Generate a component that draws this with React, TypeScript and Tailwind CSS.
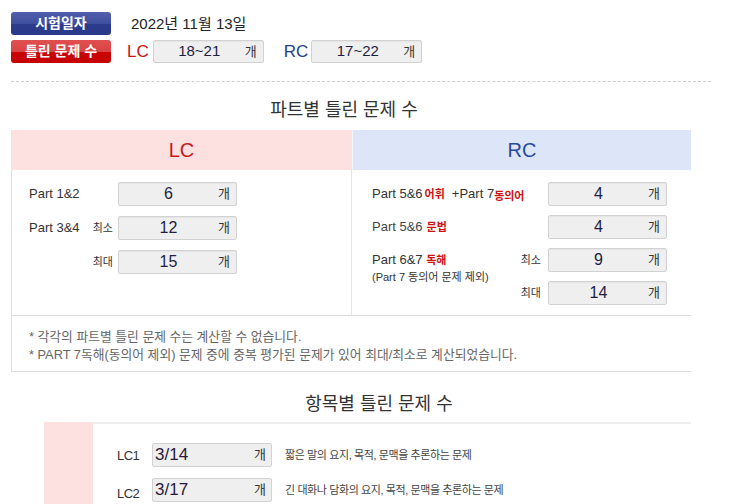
import React from "react";

const KR = "font-['Liberation_Sans','Noto_Sans_CJK_KR',sans-serif]";

function Badge({ label, tone }: { label: string; tone: "blue" | "red" }) {
  const bg =
    tone === "blue"
      ? "bg-[linear-gradient(#5060ad_0%,#3f4f9f_50%,#2c3b8c_51%,#2a3a8a_100%)]"
      : "bg-[linear-gradient(#e05050_0%,#d94444_50%,#c80404_51%,#c40000_100%)]";
  return (
    <div
      className={`flex h-[23px] w-[100px] items-center justify-center rounded-[3px] text-[14px] font-bold text-white ${bg}`}
    >
      {label}
    </div>
  );
}

function CountBox({
  value,
  w = "w-[119px]",
  h = "h-[24px]",
  size = "text-[16px]",
}: {
  value: string;
  w?: string;
  h?: string;
  size?: string;
}) {
  return (
    <div
      className={`flex ${w} ${h} shrink-0 items-center rounded-[2px] border border-[#d2d2d2] bg-[#efefef] shadow-[inset_0_1px_1px_rgba(0,0,0,0.04)]`}
    >
      <span className={`flex-1 text-center ${size} text-[#1e1e44]`}>{value}</span>
      <span className="pr-[6px] text-[13px] text-[#333]">개</span>
    </div>
  );
}

function Red({ children }: { children: React.ReactNode }) {
  return <span className="text-[11px] font-bold text-[#cc1111]">{children}</span>;
}

const ITEMS = [
  { code: "LC1", value: "3/14", desc: "짧은 말의 요지, 목적, 문맥을 추론하는 문제", pt: "pt-[3px]" },
  { code: "LC2", value: "3/17", desc: "긴 대화나 담화의 요지, 목적, 문맥을 추론하는 문제", pt: "pt-[6px]" },
];

export default function App() {
  return (
    <div className={`h-[504px] w-[732px] overflow-hidden bg-white text-[#333] ${KR}`}>
      {/* 시험 정보 */}
      <div className="pl-[11px] pt-[12px]">
        <div className="flex h-[23px] items-center">
          <Badge label="시험일자" tone="blue" />
          <span className="ml-[20px] text-[15px] leading-none text-[#222]">2022년 11월 13일</span>
        </div>
        <div className="mt-[5px] flex h-[23px] items-center">
          <Badge label="틀린 문제 수" tone="red" />
          <span className="ml-[16px] text-[17px] leading-none text-[#cc1111]">LC</span>
          <div className="ml-[4px]">
            <CountBox value="18~21" w="w-[111px]" h="h-[23px]" size="text-[15px]" />
          </div>
          <span className="ml-[20px] text-[17px] leading-none text-[#23408f]">RC</span>
          <div className="ml-[3px]">
            <CountBox value="17~22" w="w-[111px]" h="h-[23px]" size="text-[15px]" />
          </div>
        </div>
        <div className="mt-[18px] w-[700px] border-t border-dashed border-[#cccccc]" />
      </div>

      {/* 파트별 */}
      <div className="ml-[11px]">
        <div className="mt-[16px] h-[24px] w-[666px] text-center text-[18px] leading-[24px] text-[#333]">
          파트별 틀린 문제 수
        </div>
        <div className="mt-[8px] w-[680px]">
          <div className="flex h-[40px]">
            <div className="flex w-[341px] items-center justify-center bg-[#fde0e0] text-[20px] text-[#c81a1a]">
              LC
            </div>
            <div className="flex flex-1 items-center justify-center border-l border-[#f4f4f8] bg-[#dde6f8] text-[20px] text-[#2b4a9a]">
              RC
            </div>
          </div>
          <div className="flex h-[146px] border-b border-l border-[#dddddd]">
            <div className="flex w-[340px] flex-col gap-[10px] border-r border-[#e4e4e4] pl-[17px] pt-[12px]">
              <div className="flex items-center">
                <span className="w-[89px] text-[13px]">Part 1&amp;2</span>
                <CountBox value="6" />
              </div>
              <div className="flex items-center">
                <span className="w-[63px] text-[13px]">Part 3&amp;4</span>
                <span className="mr-[5px] w-[21px] text-right text-[11px] whitespace-nowrap">최소</span>
                <CountBox value="12" />
              </div>
              <div className="flex items-center">
                <span className="w-[63px]" />
                <span className="mr-[5px] w-[21px] text-right text-[11px] whitespace-nowrap">최대</span>
                <CountBox value="15" />
              </div>
            </div>
            <div className="grid grid-cols-[148px_28px_119px] grid-rows-[24px_24px_24px_24px] gap-y-[9px] pl-[20px] pt-[12px]">
              <div className="col-span-2 flex items-center text-[13px] whitespace-nowrap">
                Part 5&amp;6<span className="ml-[2px]"><Red>어휘</Red></span>
                <span className="ml-[7px]">+Part 7</span>
                <span className="mt-[3px]"><Red>동의어</Red></span>
              </div>
              <div className="col-start-3">
                <CountBox value="4" />
              </div>
              <div className="col-span-2 flex items-center text-[13px] text-[#444]">
                Part 5&amp;6<span className="ml-[4px]"><Red>문법</Red></span>
              </div>
              <div className="col-start-3">
                <CountBox value="4" />
              </div>
              <div className="row-span-2 pt-[1px]">
                <div className="text-[13px] leading-[22px]">
                  Part 6&amp;7 <Red>독해</Red>
                </div>
                <div className="text-[11px] leading-[12px] whitespace-nowrap">(Part 7 동의어 문제 제외)</div>
              </div>
              <div className="flex items-center justify-end pr-[7px] text-[11px] whitespace-nowrap">최소</div>
              <div>
                <CountBox value="9" />
              </div>
              <div className="col-start-2 flex items-center justify-end pr-[7px] text-[11px] whitespace-nowrap">최대</div>
              <div>
                <CountBox value="14" />
              </div>
            </div>
          </div>
          <div className="h-[56px] border-b border-l border-[#dddddd] pl-[17px] pt-[12px] text-[12.8px] leading-[18px] text-[#666]">
            <div>* 각각의 파트별 틀린 문제 수는 계산할 수 없습니다.</div>
            <div>* PART 7독해(동의어 제외) 문제 중에 중복 평가된 문제가 있어 최대/최소로 계산되었습니다.</div>
          </div>
        </div>
      </div>

      {/* 항목별 */}
      <div className="ml-[44px] mt-[20px] h-[24px] w-[670px] text-center text-[18px] leading-[24px] text-[#333]">
        항목별 틀린 문제 수
      </div>
      <div className="ml-[44px] mt-[6px] flex h-[100px]">
        <div className="w-[49px] bg-[#fde0e0]" />
        <div className="flex w-[598px] flex-col gap-[11px] border-t-2 border-[#eeeeee] pl-[24px] pt-[19px]">
          {ITEMS.map((it) => (
            <div key={it.code} className="flex items-start">
              <span className={`w-[35px] text-[13px] tracking-[-0.5px] ${it.pt}`}>{it.code}</span>
              <div className="flex h-[24px] w-[120px] items-center rounded-[2px] border border-[#d2d2d2] bg-[#efefef]">
                <span className="flex-1 pl-[2px] text-[17px] text-[#2a1a3a]">{it.value}</span>
                <span className="pr-[5px] text-[13px] text-[#333]">개</span>
              </div>
              <span className="ml-[13px] pt-[4px] text-[11px] tracking-[-0.4px] text-[#444]">{it.desc}</span>
            </div>
          ))}
        </div>
      </div>
    </div>
  );
}
